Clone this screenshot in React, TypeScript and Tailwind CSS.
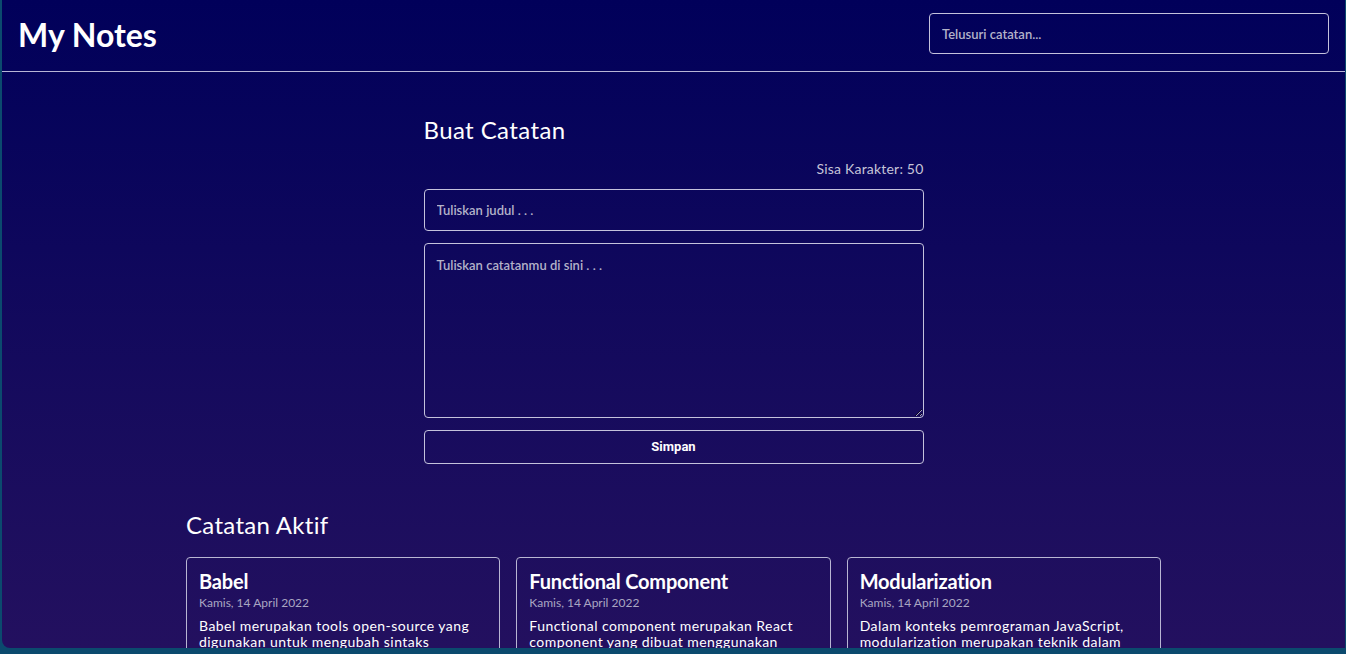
import React from "react";

const notes = [
  {
    title: "Babel",
    date: "Kamis, 14 April 2022",
    body: "Babel merupakan tools open-source yang digunakan untuk mengubah sintaks ECMAScript 2015+ menjadi sintaks yang didukung oleh JavaScript engine versi lama.",
  },
  {
    title: "Functional Component",
    date: "Kamis, 14 April 2022",
    body: "Functional component merupakan React component yang dibuat menggunakan fungsi JavaScript. Agar fungsi JavaScript dapat disebut component ataupun bukan.",
  },
  {
    title: "Modularization",
    date: "Kamis, 14 April 2022",
    body: "Dalam konteks pemrograman JavaScript, modularization merupakan teknik dalam memecah atau menggunakan kode dalam berkas JavaScript secara terpisah.",
  },
];

const font = "font-['Lato','Open_Sans',sans-serif]";

function NoteCard({ title, date, body }: { title: string; date: string; body: string }) {
  return (
    <div className="h-[200px] rounded border border-[#b9b6d3] px-3 pt-[10px] pb-4">
      <h3 className="text-[20px] font-bold leading-[26px] tracking-[-0.2px] text-white">{title}</h3>
      <p className="mt-[1px] text-[12px] leading-[16px] text-[#a9a6c2]">{date}</p>
      <p className="mt-[7px] text-[14px] leading-[16px] tracking-[0.45px] text-white">{body}</p>
    </div>
  );
}

export default function App() {
  return (
    <div className={`h-[654px] w-full overflow-hidden bg-[#0b4a6e] pl-[2px] pr-[1px] pb-[6px] ${font}`}>
      <div className="flex h-full flex-col overflow-hidden rounded-bl-lg bg-gradient-to-b from-[#01005a] to-[#23105f]">
        <header className="flex h-[72px] shrink-0 items-start justify-between border-b border-[#b7b5d6] px-4">
          <h1 className="mt-[15px] text-[32px] font-bold leading-[40px] text-white">My Notes</h1>
          <input
            type="text"
            placeholder="Telusuri catatan..."
            className="mt-[13px] h-[41px] w-[400px] rounded border border-[#c4c2dc] bg-transparent px-3 text-[13px] font-semibold text-white outline-none placeholder:text-[#b3b2c9]"
          />
        </header>

        <main className="flex flex-col items-center">
          <section className="mt-[43px] flex w-[500px] flex-col">
            <h2 className="text-[24px] leading-[29px] tracking-[0.4px] text-white">Buat Catatan</h2>
            <p className="mt-[16px] text-right text-[14px] leading-[17px] tracking-[0.2px] text-[#c6c4d8]">Sisa Karakter: 50</p>
            <input
              type="text"
              placeholder="Tuliskan judul . . ."
              className="mt-[12px] h-[42px] w-full rounded border border-[#c4c2dc] bg-transparent px-3 text-[13px] font-semibold text-white outline-none placeholder:text-[#b3b2c9]"
            />
            <textarea
              placeholder="Tuliskan catatanmu di sini . . ."
              className="mt-[12px] h-[175px] w-full rounded border border-[#c4c2dc] bg-transparent px-3 py-[12px] text-[13px] font-semibold text-white outline-none placeholder:text-[#b3b2c9]"
            />
            <button className="mt-[12px] h-[34px] w-full rounded border border-[#c4c2dc] bg-transparent font-['Roboto',sans-serif] text-[13px] font-bold text-white">
              Simpan
            </button>
          </section>

          <section className="mt-[46px] w-[975px]">
            <h2 className="text-[24px] leading-[29px] tracking-[0.3px] text-white">Catatan Aktif</h2>
            <div className="mt-[18px] grid grid-cols-3 gap-4">
              {notes.map((n) => (
                <NoteCard key={n.title} {...n} />
              ))}
            </div>
          </section>
        </main>
      </div>
    </div>
  );
}
